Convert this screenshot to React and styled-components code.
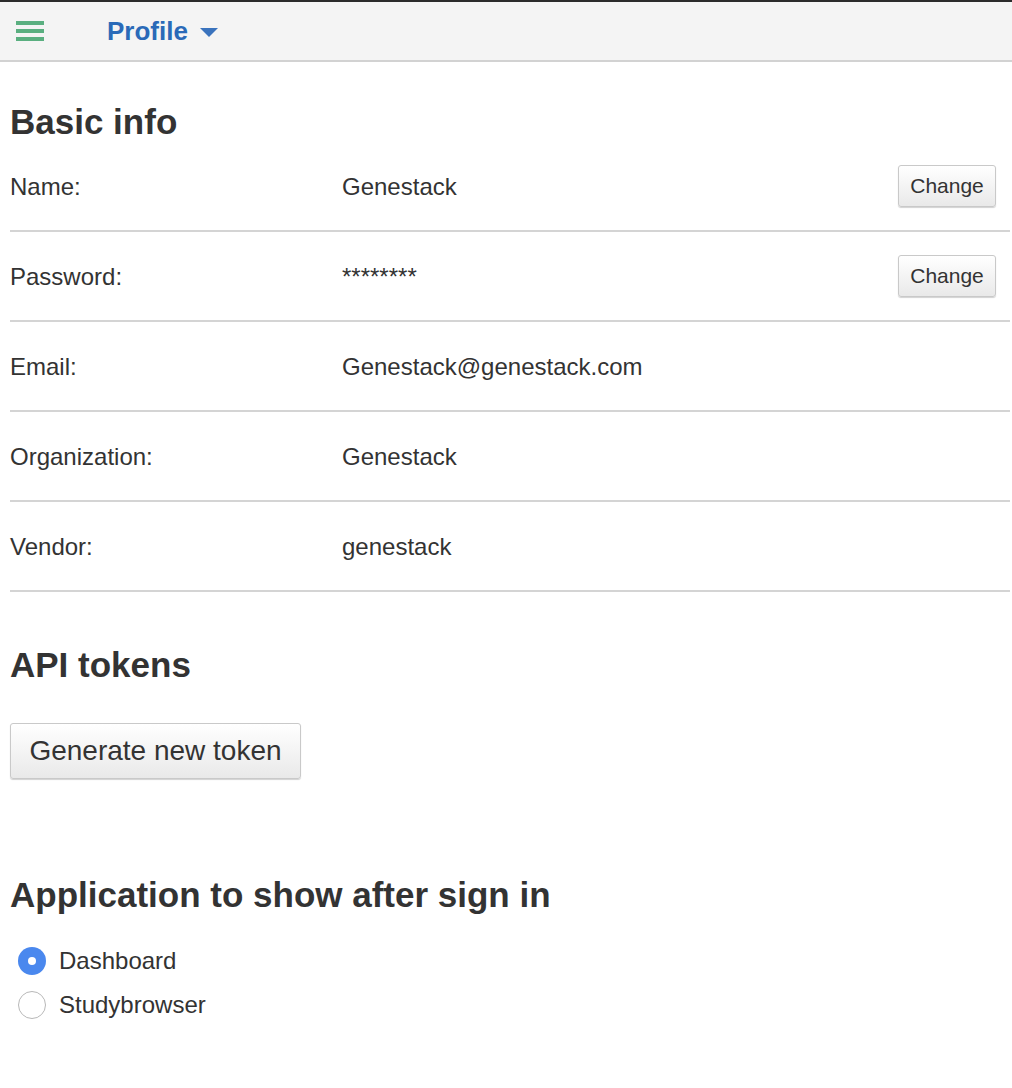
import styled, { createGlobalStyle } from "styled-components";

const GlobalStyle = createGlobalStyle`
    body {
        margin: 0;
        background: #fff;
        font-family: "Liberation Sans", Arial, sans-serif;
        color: #333;
    }
`;

const Page = styled.div`
    width: 1012px;
    min-height: 1088px;
`;

const TopBar = styled.header`
    display: flex;
    align-items: center;
    height: 58px;
    background: #f4f4f4;
    border-top: 2px solid #2b2b2b;
    border-bottom: 2px solid #d2d2d2;
`;

const MenuButton = styled.button`
    display: flex;
    flex-direction: column;
    justify-content: space-between;
    width: 28px;
    height: 20px;
    margin-left: 16px;
    padding: 0;
    border: none;
    background: none;
    span {
        display: block;
        height: 4px;
        background: #5aaf80;
    }
`;

const TitleMenu = styled.div`
    display: flex;
    align-items: center;
    gap: 12px;
    margin-left: 63px;
    font-size: 26px;
    font-weight: 700;
    color: #2a6ab8;
`;

const Caret = styled.span`
    width: 0;
    height: 0;
    border-left: 9px solid transparent;
    border-right: 9px solid transparent;
    border-top: 9px solid #3a73bd;
    margin-top: 3px;
`;

const Content = styled.main`
    padding: 0 2px 0 10px;
`;

const Heading = styled.h2`
    margin: ${p => p.$top}px 0 0;
    font-size: 35px;
    line-height: 40px;
    font-weight: 700;
    color: #333;
`;

const InfoRow = styled.div`
    display: flex;
    align-items: center;
    height: 88px;
    border-bottom: 2px solid #d4d4d4;
    font-size: 24px;
`;

const Label = styled.div`
    width: 332px;
    flex-shrink: 0;
    padding-top: 1px;
`;

const Value = styled.div`
    flex: 1;
    padding-top: 1px;
`;

const Button = styled.button`
    font-family: "Liberation Sans", Arial, sans-serif;
    color: #333;
    background: linear-gradient(#ffffff, #e9e9e9);
    border: 1px solid #c9c9c9;
    border-radius: 3px;
    box-shadow: 0 1px 1px rgba(0, 0, 0, 0.18);
    cursor: pointer;
`;

const ChangeButton = styled(Button)`
    width: 98px;
    height: 42px;
    margin-right: 14px;
    font-size: 21px;
    padding: 0;
`;

const TokenButton = styled(Button)`
    display: block;
    width: 291px;
    height: 56px;
    margin-top: 38px;
    font-size: 28px;
    padding: 0;
`;

const RadioList = styled.div`
    display: flex;
    flex-direction: column;
    margin-top: 24px;
`;

const RadioRow = styled.label`
    display: flex;
    align-items: center;
    height: 44px;
    font-size: 24px;
    gap: 13px;
    padding-left: 8px;
`;

const RadioDot = styled.span`
    box-sizing: border-box;
    width: 28px;
    height: 28px;
    border-radius: 50%;
    display: flex;
    align-items: center;
    justify-content: center;
    background: ${p => (p.$checked ? "#4a88ee" : "#fff")};
    border: ${p => (p.$checked ? "none" : "1.5px solid #b8b8b8")};
    &::after {
        content: "";
        display: ${p => (p.$checked ? "block" : "none")};
        width: 8px;
        height: 8px;
        border-radius: 50%;
        background: #fff;
    }
`;

const rows = [
    { label: "Name:", value: "Genestack", change: true },
    { label: "Password:", value: "********", change: true },
    { label: "Email:", value: "Genestack@genestack.com" },
    { label: "Organization:", value: "Genestack" },
    { label: "Vendor:", value: "genestack" },
];

export default function App() {
    return (
        <Page>
            <GlobalStyle />
            <TopBar>
                <MenuButton aria-label="Menu">
                    <span />
                    <span />
                    <span />
                </MenuButton>
                <TitleMenu>
                    Profile
                    <Caret />
                </TitleMenu>
            </TopBar>
            <Content>
                <Heading $top={40}>Basic info</Heading>
                {rows.map(r => (
                    <InfoRow key={r.label}>
                        <Label>{r.label}</Label>
                        <Value>{r.value}</Value>
                        {r.change && <ChangeButton>Change</ChangeButton>}
                    </InfoRow>
                ))}
                <Heading $top={53}>API tokens</Heading>
                <TokenButton>Generate new token</TokenButton>
                <Heading $top={96}>Application to show after sign in</Heading>
                <RadioList>
                    <RadioRow>
                        <RadioDot $checked />
                        Dashboard
                    </RadioRow>
                    <RadioRow>
                        <RadioDot />
                        Studybrowser
                    </RadioRow>
                </RadioList>
            </Content>
        </Page>
    );
}
